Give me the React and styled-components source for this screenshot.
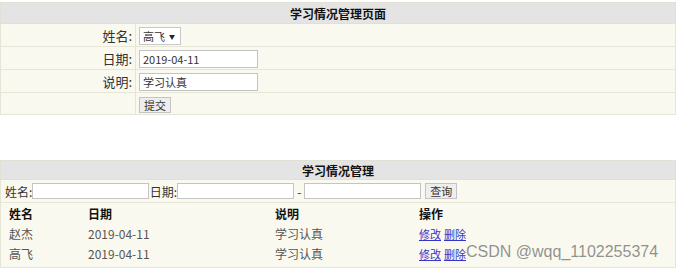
import React from "react";
import styled, { createGlobalStyle } from "styled-components";

const Global = createGlobalStyle`
  html, body { margin: 0; padding: 0; background: #fff; }
  body { font-family: "Noto Sans CJK SC", "Liberation Sans", sans-serif; font-size: 12px; color: #333; }
  * { box-sizing: border-box; }
`;

const Page = styled.div`
  position: relative;
  width: 676px;
  height: 270px;
  padding-top: 2px;
  overflow: hidden;
`;

const Table = styled.table`
  width: 100%;
  border-collapse: collapse;
  margin-top: ${(p) => p.$mt || 0}px;
`;

const HeadCell = styled.th`
  background: #e4e4e4;
  border: 1px solid #e0e0d4;
  height: ${(p) => p.$h || 20}px;
  padding: 0;
  font-size: 12px;
  font-weight: bold;
  color: #111;
  text-align: center;
`;

const Cell = styled.td`
  background: #f9f9ef;
  border: 1px solid #e6e6d6;
  height: ${(p) => p.$h || 23}px;
  padding: ${(p) => p.$pad || "0 3px"};
  text-align: ${(p) => p.$align || "left"};
  width: ${(p) => (p.$w ? p.$w + "px" : "auto")};
  font-size: 13px;
  color: #333;
  vertical-align: middle;
`;

const SelectBox = styled.span`
  display: inline-flex;
  align-items: center;
  gap: 4px;
  height: 18px;
  padding: 0 5px 0 3px;
  border: 1px solid #c8c8c8;
  background: #fff;
  font-size: 11px;
  color: #333;
  vertical-align: middle;
`;

const Arrow = styled.span`
  font-size: 6px;
  color: #222;
`;

const TextInput = styled.input`
  width: ${(p) => p.$w}px;
  height: ${(p) => p.$h || 18}px;
  border: 1px solid #c4c4c4;
  background: #fff;
  font-family: inherit;
  font-size: 11px;
  color: #333;
  padding: 0 3px;
  margin: 0;
  vertical-align: middle;
`;

const Button = styled.button`
  height: 16px;
  padding: 0 4px;
  border: 1px solid #c4c4c4;
  background: #eeeeee;
  font-family: inherit;
  font-size: 11px;
  line-height: 14px;
  color: #333;
  margin: 0 0 0 ${(p) => p.$ml || 0}px;
  vertical-align: middle;
`;

const SearchRow = styled.div`
  display: flex;
  align-items: center;
  font-size: 12px;
  color: #333;
`;

const Gap = styled.span`
  display: inline-block;
  width: ${(p) => p.$w}px;
  text-align: center;
`;

const Grid = styled.div`
  display: grid;
  grid-template-columns: 79px 187px 144px 1fr;
  padding: 1px 0 3px 8px;
`;

const GridCell = styled.div`
  height: 20px;
  line-height: 20px;
  font-size: 12px;
  font-weight: ${(p) => (p.$head ? "bold" : "normal")};
  color: ${(p) => (p.$head ? "#111" : "#555")};
  white-space: nowrap;
`;

const Link = styled.a`
  color: #3535c8;
  font-size: 11px;
  text-decoration: underline;
  margin-right: ${(p) => p.$mr || 0}px;
`;

const Watermark = styled.div`
  position: absolute;
  left: 466px;
  top: 243px;
  font-family: "Liberation Sans", Arial, sans-serif;
  font-size: 16px;
  line-height: 18px;
  color: rgba(110, 110, 110, 0.75);
  pointer-events: none;
`;

const rows = [
  { name: "赵杰", date: "2019-04-11", note: "学习认真" },
  { name: "高飞", date: "2019-04-11", note: "学习认真" },
];

export default function App() {
  return (
    <Page>
      <Global />
      <Table>
        <tbody>
          <tr>
            <HeadCell colSpan={2} $h={21}>学习情况管理页面</HeadCell>
          </tr>
          <tr>
            <Cell $w={135} $align="right">姓名:</Cell>
            <Cell>
              <SelectBox>
                高飞 <Arrow>▼</Arrow>
              </SelectBox>
            </Cell>
          </tr>
          <tr>
            <Cell $w={135} $align="right">日期:</Cell>
            <Cell>
              <TextInput $w={119} defaultValue="2019-04-11" />
            </Cell>
          </tr>
          <tr>
            <Cell $w={135} $align="right">说明:</Cell>
            <Cell>
              <TextInput $w={119} defaultValue="学习认真" />
            </Cell>
          </tr>
          <tr>
            <Cell $w={135} $h={22}></Cell>
            <Cell $h={22}>
              <Button>提交</Button>
            </Cell>
          </tr>
        </tbody>
      </Table>

      <Table $mt={45}>
        <tbody>
          <tr>
            <HeadCell $h={19}>学习情况管理</HeadCell>
          </tr>
          <tr>
            <Cell $h={23} $pad="0 0 0 4px">
              <SearchRow>
                姓名:
                <TextInput $w={117} $h={16} />
                <Gap $w={28}>日期:</Gap>
                <TextInput $w={117} $h={16} />
                <Gap $w={10}>-</Gap>
                <TextInput $w={117} $h={16} />
                <Button $ml={4}>查询</Button>
              </SearchRow>
            </Cell>
          </tr>
          <tr>
            <Cell $pad="0" $h={64}>
              <Grid>
                <GridCell $head>姓名</GridCell>
                <GridCell $head>日期</GridCell>
                <GridCell $head>说明</GridCell>
                <GridCell $head>操作</GridCell>
                {rows.map((r, i) => (
                  <React.Fragment key={i}>
                    <GridCell>{r.name}</GridCell>
                    <GridCell>{r.date}</GridCell>
                    <GridCell>{r.note}</GridCell>
                    <GridCell>
                      <Link href="#" $mr={3}>修改</Link>
                      <Link href="#">删除</Link>
                    </GridCell>
                  </React.Fragment>
                ))}
              </Grid>
            </Cell>
          </tr>
        </tbody>
      </Table>
      <Watermark>CSDN @wqq_1102255374</Watermark>
    </Page>
  );
}
